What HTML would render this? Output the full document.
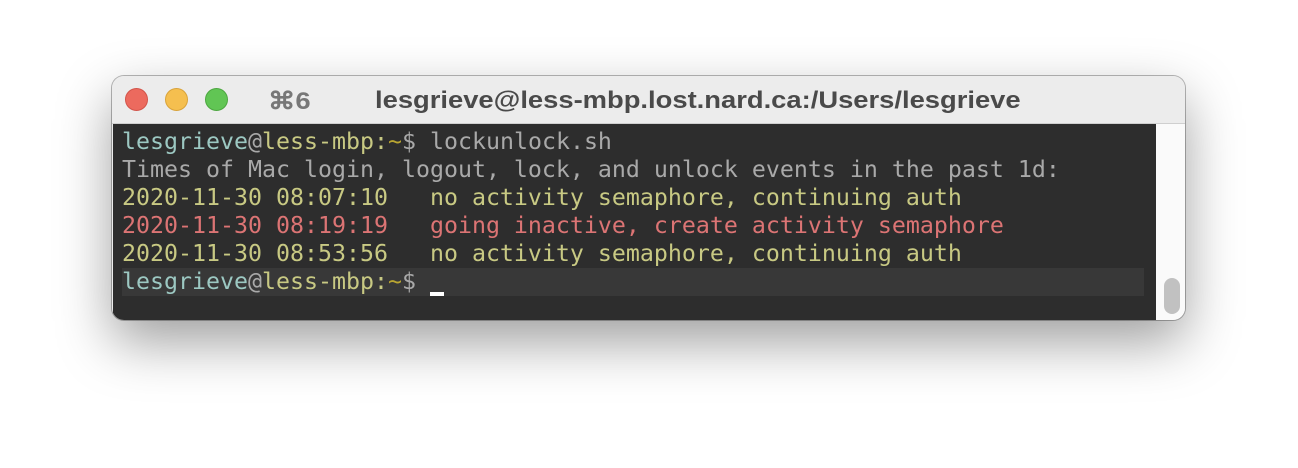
<!DOCTYPE html>
<html><head><style>
html,body{margin:0;padding:0;width:1298px;height:468px;background:#fff;overflow:hidden}
.win{position:absolute;left:112px;top:76px;width:1073px;height:244px;border-radius:12px;background:#ececec;box-shadow:0 22px 55px rgba(0,0,0,.38),0 0 0 1px #b8b8b8;overflow:hidden}
.tb{position:absolute;left:0;top:0;width:100%;height:47px;background:#ececec;border-bottom:1px solid #cfcfcf}
.dot{position:absolute;top:12px;width:23px;height:23px;border-radius:50%}
.title{position:absolute;left:0;top:11px;font:bold 24px "Liberation Sans",sans-serif;color:#4a4a4a;transform-origin:0 50%;transform:scaleX(1.14)}
.term{position:absolute;left:1px;top:48px;width:1043px;height:196px;background:#2d2d2d}
.sb{position:absolute;left:1044px;top:48px;width:29px;height:196px;background:#fafafa}
.thumb{position:absolute;left:1052px;top:202px;width:16px;height:36px;border-radius:8px;background:#c1c1c1}
.ln{position:absolute;left:9px;font:23.25px "DejaVu Sans Mono",monospace;white-space:pre;height:28px;line-height:28px}
.g{color:#a9a9a9}.c{color:#9cc8c2}.y{color:#c8c983}.t{color:#b9a531}.r{color:#dc7474}
.hl{position:absolute;left:9px;top:144px;width:1022px;height:28px;background:#383838}
.cur{position:absolute;left:317px;top:168px;width:14px;height:4px;background:#fff}
</style></head><body>
<div class="win">
<div class="tb">
<div class="dot" style="left:13px;background:#ec6a5e;border:1px solid #d2544a;box-sizing:border-box"></div>
<div class="dot" style="left:53px;background:#f5bf4f;border:1px solid #d9a33a;box-sizing:border-box"></div>
<div class="dot" style="left:93px;background:#61c554;border:1px solid #4ca740;box-sizing:border-box"></div>
<div class="title" style="left:156px;color:#777">⌘6</div>
<div class="title" style="left:263px">lesgrieve@less-mbp.lost.nard.ca:/Users/lesgrieve</div>
</div>
<div class="term">
<div class="hl"></div>
<div class="ln" style="top:4px"><span class="c">lesgrieve</span><span class="g">@</span><span class="y">less-mbp:</span><span class="t">~</span><span class="g">$ lockunlock.sh</span></div>
<div class="ln g" style="top:32px">Times of Mac login, logout, lock, and unlock events in the past 1d:</div>
<div class="ln y" style="top:60px">2020-11-30 08:07:10   no activity semaphore, continuing auth</div>
<div class="ln r" style="top:88px">2020-11-30 08:19:19   going inactive, create activity semaphore</div>
<div class="ln y" style="top:116px">2020-11-30 08:53:56   no activity semaphore, continuing auth</div>
<div class="ln" style="top:144px"><span class="c">lesgrieve</span><span class="g">@</span><span class="y">less-mbp:</span><span class="t">~</span><span class="g">$</span></div>
<div class="cur"></div>
</div>
<div class="sb"></div>
<div class="thumb"></div>
</div>
</body></html>
